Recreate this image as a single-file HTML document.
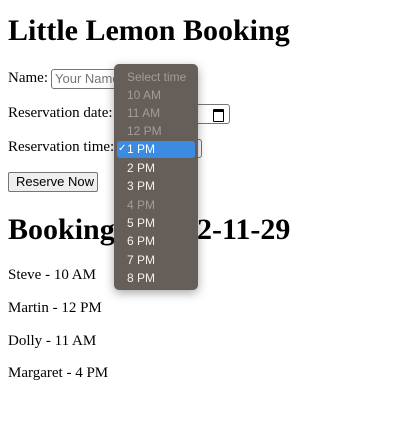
<!DOCTYPE html>
<html><head><style>
body{margin:0;width:412px;height:426px;background:#fff;font-family:"Liberation Serif",serif;color:#000;position:relative;overflow:hidden}
.a{position:absolute;white-space:nowrap}
h1,h2{margin:0;font-size:30px;font-weight:bold}
.t{font-size:15px}
.box{position:absolute;border:1px solid #767676;border-radius:3px;background:#fff;box-sizing:border-box}
.dd{position:absolute;left:114px;top:64px;width:84px;height:226px;background:#655e59;border-radius:5px;box-shadow:0 3px 10px rgba(0,0,0,.35)}
.it{position:absolute;left:13px;font-family:"Liberation Sans",sans-serif;font-size:12px;color:#f4f2f0;line-height:14px}
.dis{color:#a39d98}
.hl{position:absolute;left:3px;top:77px;width:78px;height:17px;background:#3d8be0;border-radius:3px}
</style></head><body>
<h1 class="a" style="left:8px;top:14px">Little Lemon Booking</h1>
<div class="a t" style="left:8px;top:70px">Name:</div>
<div class="box" style="left:51px;top:69px;width:100px;height:20px"><span style="font-family:'Liberation Sans',sans-serif;font-size:13px;color:#757575;position:absolute;left:3px;top:1px">Your Name</span></div>
<div class="a t" style="left:8px;top:105px">Reservation date:</div>
<div class="box" style="left:118px;top:104px;width:112px;height:20px"><div style="position:absolute;right:5px;top:4px;width:9px;height:9px;border:1.5px solid #000;border-top-width:3px;border-radius:1px"></div></div>
<div class="a t" style="left:8px;top:139px">Reservation time:</div>
<div class="box" style="left:115px;top:139px;width:87px;height:19px"></div>
<div class="box" style="left:8px;top:172px;width:90px;height:20px;background:#efefef;border-radius:2px"><span style="position:absolute;left:7px;top:1px;font-family:'Liberation Sans',sans-serif;font-size:13px">Reserve Now</span></div>
<h2 class="a" style="left:8px;top:213px">Bookings for</h2>
<h2 class="a" style="left:197px;top:213px">2-11-29</h2>
<div class="a t" style="left:8px;top:267px">Steve - 10 AM</div>
<div class="a t" style="left:8px;top:300px">Martin - 12 PM</div>
<div class="a t" style="left:8px;top:333px">Dolly - 11 AM</div>
<div class="a t" style="left:8px;top:365px">Margaret - 4 PM</div>
<div class="dd">
<div class="hl"></div>
<div class="it dis" style="top:6px">Select time</div>
<div class="it dis" style="top:24px">10 AM</div>
<div class="it dis" style="top:42px">11 AM</div>
<div class="it dis" style="top:60px">12 PM</div>
<div class="it" style="top:78px;color:#fff"><span style="position:absolute;left:-9px;font-size:10px">✓</span>1 PM</div>
<div class="it" style="top:97px">2 PM</div>
<div class="it" style="top:115px">3 PM</div>
<div class="it dis" style="top:134px">4 PM</div>
<div class="it" style="top:152px">5 PM</div>
<div class="it" style="top:170px">6 PM</div>
<div class="it" style="top:189px">7 PM</div>
<div class="it" style="top:207px">8 PM</div>
</div>
</body></html>
